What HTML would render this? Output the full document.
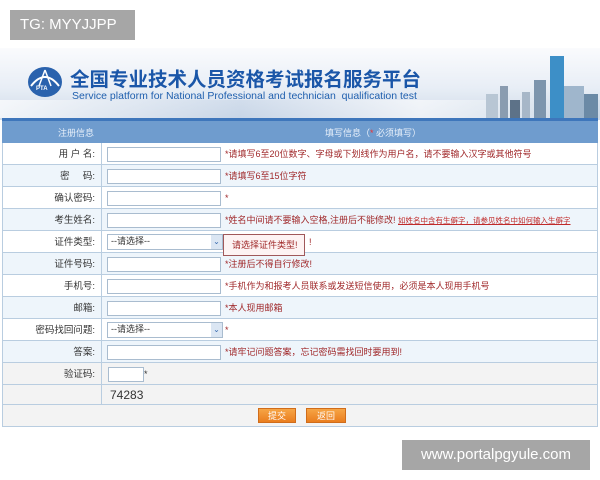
<!DOCTYPE html>
<html><head><meta charset="utf-8"><style>
*{margin:0;padding:0;box-sizing:border-box}
body{width:600px;height:480px;background:#fff;position:relative;overflow:hidden;font-family:"Liberation Sans","Noto Sans CJK SC",sans-serif;font-size:10px;color:#333}
.abs{position:absolute}
.banner{left:0;top:48px;width:600px;height:72px;background:linear-gradient(180deg,#fafbfd 0%,#e8eef6 55%,#cfdae8 100%)}
.title{left:70px;top:63px;font-size:19.5px;font-weight:bold;color:#1a56a8;font-family:"Noto Sans CJK SC",sans-serif}
.sub{left:72px;top:90px;font-size:10.5px;color:#1f5fae}
.hdr{left:2px;top:118px;width:596px;height:25px;background:#6f9cce;border-top:3px solid #3e76bb;color:#e8f0fa;font-size:9px}
.row{left:2px;width:596px;height:22px;border-bottom:1px solid #b9cde0;border-left:1px solid #b9cde0;border-right:1px solid #b9cde0}
.lab{position:absolute;left:0;top:0;width:99px;height:100%;border-right:1px solid #b9cde0;text-align:right;padding-right:6px;line-height:23px;font-size:9.5px;color:#333}
.inp{position:absolute;left:104px;top:4px;width:114px;height:15px;border:1px solid #a9bccf;background:#fff}
.tip{position:absolute;left:222px;top:0;line-height:22px;color:#a0282a;font-size:9px;white-space:nowrap}
.sel{position:absolute;left:104px;top:3px;width:116px;height:16px;border:1px solid #a9bccf;background:#fff;font-size:9px;line-height:13px;padding-left:3px}
.sel i{position:absolute;right:0;top:0;width:11px;height:14px;background:#dbe6f3;color:#3b6db0;font-style:normal;font-size:8px;text-align:center;line-height:14px}
.btn{top:408px;height:15px;background:linear-gradient(#f6a545,#ea7d1e);color:#fff;font-size:9px;text-align:center;line-height:15px;border:1px solid #d06c1a}
</style></head><body>
<div class="abs banner"></div>
<div class="abs" style="left:0;top:100px;width:600px;height:18px;background:linear-gradient(90deg,rgba(255,255,255,0.7),rgba(180,200,225,0.3) 40%,rgba(255,255,255,0.6) 70%,rgba(200,215,230,0.4))"></div>
<svg class="abs" style="left:26px;top:66px" width="38" height="32"><ellipse cx="19" cy="16" rx="17" ry="15" fill="#2a62ad"/><path d="M5 20 Q19 2 33 20" stroke="#fff" stroke-width="2" fill="none"/><path d="M19 4 L13 20 M19 4 L25 20" stroke="#fff" stroke-width="1.5"/><text x="10" y="24" font-size="6" fill="#fff" font-weight="bold" font-family="Liberation Sans">PTA</text></svg>
<div class="abs title">全国专业技术人员资格考试报名服务平台</div>
<div class="abs sub">Service platform for National Professional and technician&nbsp; qualification test</div>
<svg class="abs" style="left:480px;top:50px" width="120" height="68">
<rect x="70" y="6" width="14" height="62" fill="#3d8fc7"/><rect x="84" y="36" width="20" height="32" fill="#9fb6cc"/><rect x="104" y="44" width="14" height="24" fill="#6b8aa6"/>
<rect x="6" y="44" width="12" height="24" fill="#b8c6d4"/><rect x="20" y="36" width="8" height="32" fill="#8a9cb0"/><rect x="30" y="50" width="10" height="18" fill="#5d7288"/><rect x="42" y="42" width="8" height="26" fill="#a7b7c8"/><rect x="54" y="30" width="12" height="38" fill="#7d95ad"/></svg>
<div class="abs hdr"><span class="abs" style="left:56px;top:5px">注册信息</span><span class="abs" style="left:323px;top:5px">填写信息（<span style="color:#e33">*</span> 必须填写）</span></div>

<div class="abs row" style="top:143px;background:#fff"><div class="lab">用 户 名:</div><div class="inp"></div><div class="tip">*请填写6至20位数字、字母或下划线作为用户名，请不要输入汉字或其他符号</div></div>
<div class="abs row" style="top:165px;background:#eef5fb"><div class="lab">密 &nbsp; &nbsp; 码:</div><div class="inp"></div><div class="tip">*请填写6至15位字符</div></div>
<div class="abs row" style="top:187px;background:#fff"><div class="lab">确认密码:</div><div class="inp"></div><div class="tip">*</div></div>
<div class="abs row" style="top:209px;background:#eef5fb"><div class="lab">考生姓名:</div><div class="inp"></div><div class="tip">*姓名中间请不要输入空格,注册后不能修改! <span style="text-decoration:underline;font-size:7.5px;color:#c02a2a">如姓名中含有生僻字，请参见姓名中如何输入生僻字</span></div></div>
<div class="abs row" style="top:231px;background:#fff"><div class="lab">证件类型:</div><div class="sel">--请选择--<i>⌄</i></div><div class="tip" style="left:306px">!</div></div>
<div class="abs row" style="top:253px;background:#eef5fb"><div class="lab">证件号码:</div><div class="inp"></div><div class="tip">*注册后不得自行修改!</div></div>
<div class="abs row" style="top:275px;background:#fff"><div class="lab">手机号:</div><div class="inp"></div><div class="tip">*手机作为和报考人员联系或发送短信使用，必须是本人现用手机号</div></div>
<div class="abs row" style="top:297px;background:#eef5fb"><div class="lab">邮箱:</div><div class="inp"></div><div class="tip">*本人现用邮箱</div></div>
<div class="abs row" style="top:319px;background:#fff"><div class="lab">密码找回问题:</div><div class="sel">--请选择--<i>⌄</i></div><div class="tip">*</div></div>
<div class="abs row" style="top:341px;background:#eef5fb"><div class="lab">答案:</div><div class="inp"></div><div class="tip">*请牢记问题答案，忘记密码需找回时要用到!</div></div>
<div class="abs row" style="top:363px;background:#f3f3f3"><div class="lab">验证码:</div><div class="inp" style="width:36px;left:105px"></div><div class="tip" style="left:141px;color:#333">*</div></div>
<div class="abs row" style="top:385px;height:20px;background:#f3f3f3"><div class="lab"></div><div class="abs" style="left:107px;top:3px;font-size:12px;color:#333;font-family:'Liberation Sans',sans-serif">74283</div></div>
<div class="abs row" style="top:405px;height:22px;background:#f3f3f3"></div>
<div class="abs btn" style="left:258px;width:38px">提交</div>
<div class="abs btn" style="left:306px;width:40px">返回</div>

<div class="abs" style="left:223px;top:234px;width:82px;height:22px;background:#fdf3f3;border:1px solid #a0585a;color:#a02a2a;font-size:9px;line-height:20px;padding-left:8px">请选择证件类型!</div>

<div class="abs" style="left:10px;top:10px;width:125px;height:30px;background:#a6a6a6;color:#fff;font-size:15px;line-height:30px;padding-left:10px">TG: MYYJJPP</div>
<div class="abs" style="left:402px;top:440px;width:188px;height:30px;background:#a6a6a6;color:#fff;font-size:15px;line-height:30px;text-align:center">www.portalpgyule.com</div>
</body></html>
